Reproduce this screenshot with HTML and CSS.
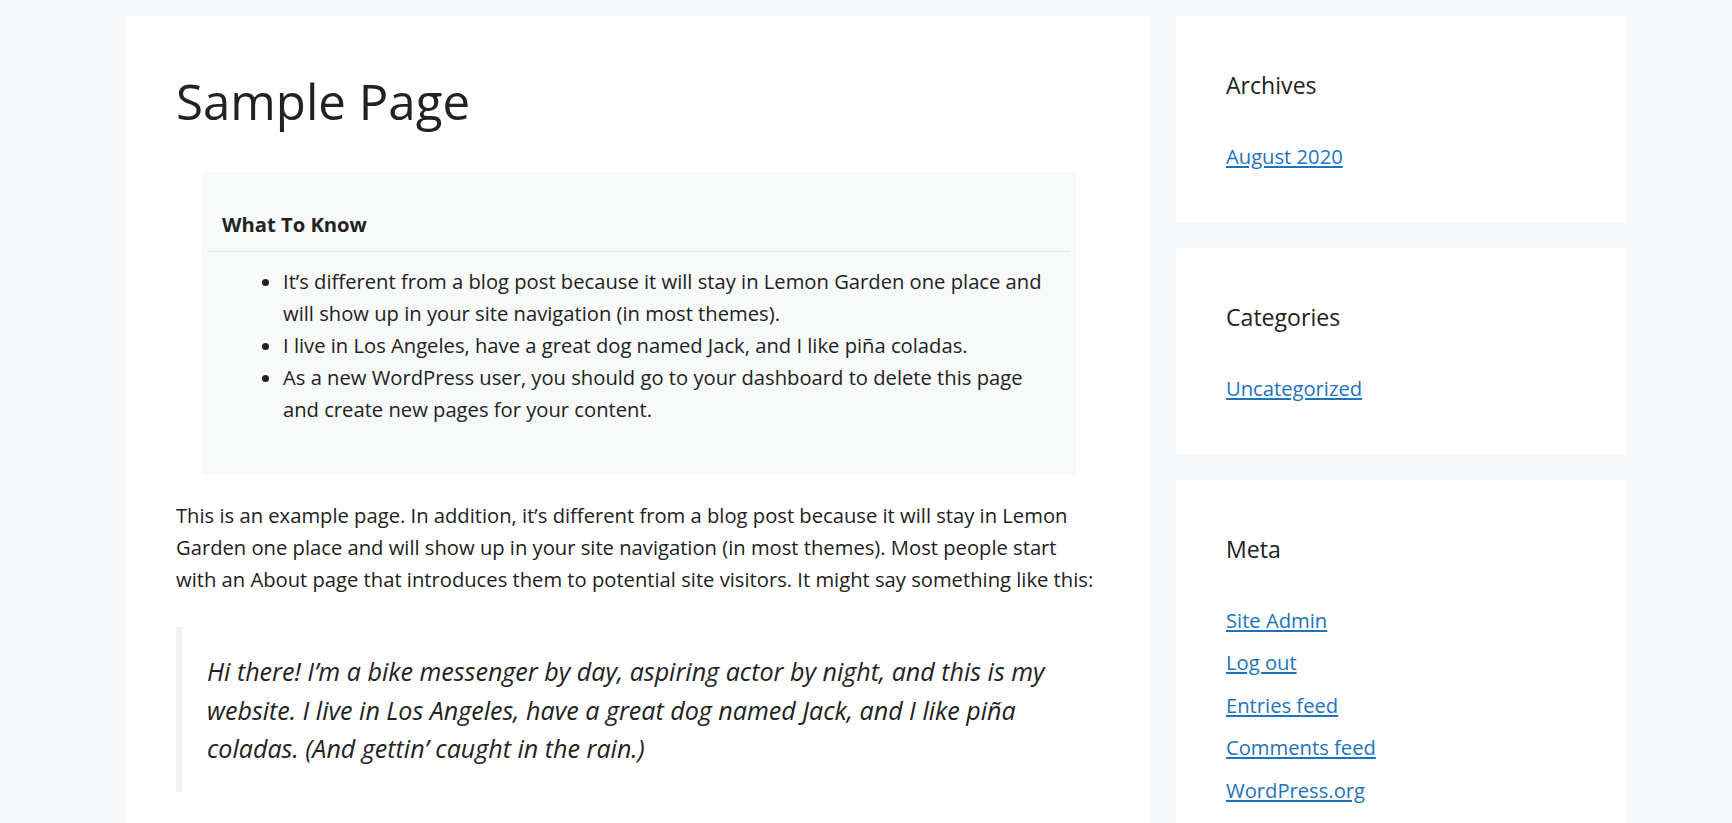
FILE: index.html
```html
<!DOCTYPE html>
<html lang="en">
<head>
<meta charset="utf-8">
<title>Sample Page</title>
<link rel="stylesheet" href="styles.css">
</head>
<body>
<div class="site">
  <main class="content-area">
    <article class="card article">
      <h1 class="entry-title">Sample Page</h1>
      <div class="entry-content">
        <div class="know-box">
          <div class="know-title">What To Know</div>
          <hr class="know-rule">
          <ul class="know-list">
            <li>It’s different from a blog post because it will stay in Lemon Garden one place and<br> will show up in your site navigation (in most themes).</li>
            <li>I live in Los Angeles, have a great dog named Jack, and I like piña coladas.</li>
            <li>As a new WordPress user, you should go to your dashboard to delete this page<br> and create new pages for your content.</li>
          </ul>
        </div>
        <p class="para">This is an example page. In addition, it’s different from a blog post because it will stay in Lemon<br> Garden one place and will show up in your site navigation (in most themes). Most people start<br> with an About page that introduces them to potential site visitors. It might say something like this:</p>
        <blockquote class="quote"><p>Hi there! I’m a bike messenger by day, aspiring actor by night, and this is my<br> website. I live in Los Angeles, have a great dog named Jack, and I like piña<br> coladas. (And gettin’ caught in the rain.)</p></blockquote>
      </div>
    </article>
  </main>
  <aside class="sidebar">
    <section class="card widget">
      <h2 class="widget-title">Archives</h2>
      <ul class="widget-list"><li><a href="#">August 2020</a></li></ul>
    </section>
    <section class="card widget">
      <h2 class="widget-title">Categories</h2>
      <ul class="widget-list"><li><a href="#">Uncategorized</a></li></ul>
    </section>
    <section class="card widget">
      <h2 class="widget-title">Meta</h2>
      <ul class="widget-list">
        <li><a href="#">Site Admin</a></li>
        <li><a href="#">Log out</a></li>
        <li><a href="#">Entries feed</a></li>
        <li><a href="#">Comments feed</a></li>
        <li><a href="#">WordPress.org</a></li>
      </ul>
    </section>
  </aside>
</div>
</body>
</html>
```

FILE: styles.css
```css
* { box-sizing: border-box; }
body {
  margin: 0;
  background: #f7f8f9;
  color: #222222;
  font-family: "Open Sans", "Noto Sans", sans-serif;
  font-size: 20.2px;
  line-height: 31.875px;
}
.site {
  display: flex;
  width: 1500px;
  margin-left: 126px;
  padding-top: 16px;
}
.content-area { flex: 0 0 1050px; padding-right: 25px; }
.sidebar { flex: 0 0 450px; }
.card { background: #ffffff; padding: 50px; }
.entry-title {
  margin: 0;
  padding-top: 3px;
  font-size: 49.2px;
  line-height: 63px;
  font-weight: 400;
  color: #222222;
}
.entry-content { margin-top: 39.5px; }
.know-box {
  margin: 0 25px 24px;
  background: #f8f9f9;
  border-radius: 4px;
  padding: 37px 6px 49px;
}
.know-title { font-weight: 700; padding: 0 15px; }
.know-rule { border: 0; border-top: 1px solid #e4e5e5; margin: 11px 0 14px; }
.know-list { margin: 0; padding: 0 0 0 76px; }
.para { margin: 0 0 32px; padding-top: 1px; }
.quote {
  margin: 0;
  border-left: 6px solid #f2f2f2;
  padding: 25px;
  font-style: italic;
  font-size: 25.07px;
  line-height: 38.25px;
}
.quote p { margin: 0; }
.widget { margin-bottom: 25px; }
.widget-title {
  margin: 0 0 37.5px;
  padding-top: 1px;
  font-size: 23.1px;
  line-height: 36.5px;
  font-weight: 400;
  color: #222222;
}
.widget-list { list-style: none; margin: 0; padding: 0; }
.widget-list li { margin-bottom: 10.625px; }
.widget-list li:last-child { margin-bottom: 0; }
.widget-list a { color: #1e73be; }
```
